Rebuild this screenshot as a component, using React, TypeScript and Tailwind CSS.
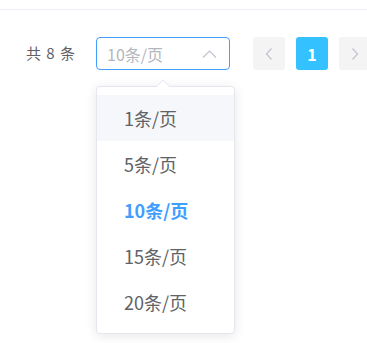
import React from "react";

const sizes = [1, 5, 10, 15, 20];

const App = () => {
  return (
    <div className="w-[367px] h-[343px] bg-white overflow-hidden font-['Noto_Sans_CJK_SC','Noto_Sans',sans-serif]">
      <div className="h-[10px] border-b border-[#ebeef5]" />
      <div className="flex items-center pl-[26px] mt-[27px] h-[33px]">
        <span className="inline-block shrink-0 text-[15px] text-[#606266] w-[70px] [word-spacing:2px]">共 8 条</span>
        <div className="relative shrink-0">
          <div className="w-[134px] h-[33px] border border-[#409eff] rounded-[4px] flex items-center pl-[10px] pr-[12px] justify-between">
            <span className="text-[16px] text-[#b4b7bd]">10条/页</span>
            <svg width="15" height="8" viewBox="0 0 15 8" fill="none">
              <path d="M1 7.5L7.5 1L14 7.5" stroke="#c0c4cc" strokeWidth="1.2" />
            </svg>
          </div>
          <div className="absolute left-0 top-[49px] w-[139px] bg-white border border-[#e4e7ed] rounded-[4px] shadow-[0_2px_12px_rgba(0,0,0,0.1)] py-[8px] z-10">
            <svg className="absolute left-[59px] top-[-8px]" width="14" height="8" viewBox="0 0 14 8">
              <path d="M0 8L7 1L14 8" fill="white" stroke="#e4e7ed" strokeWidth="1" />
            </svg>
            {sizes.map((s) => (
              <div
                key={s}
                className={
                  s === 1
                    ? "h-[46px] flex items-center pl-[27px] text-[18px] text-[#606266] bg-[#f5f7fa]"
                    : s === 10
                    ? "h-[46px] flex items-center pl-[27px] text-[18px] text-[#409eff] font-bold"
                    : "h-[46px] flex items-center pl-[27px] text-[18px] text-[#606266]"
                }
              >
                {s}条/页
              </div>
            ))}
          </div>
        </div>
        <div className="flex items-center gap-[11px] ml-[23px]">
          <div className="shrink-0 w-[32px] h-[33px] bg-[#f4f4f5] rounded-[3px] flex items-center justify-center">
            <svg width="8" height="12" viewBox="0 0 8 12" fill="none">
              <path d="M6.5 0.5L1.5 6L6.5 11.5" stroke="#c0c4cc" strokeWidth="1.2" />
            </svg>
          </div>
          <div className="shrink-0 w-[32px] h-[33px] bg-[#33c2ff] rounded-[3px] flex items-center justify-center text-white font-bold text-[16px]">
            1
          </div>
          <div className="shrink-0 w-[32px] h-[33px] bg-[#f4f4f5] rounded-[3px] flex items-center justify-center">
            <svg width="8" height="12" viewBox="0 0 8 12" fill="none">
              <path d="M1.5 0.5L6.5 6L1.5 11.5" stroke="#c0c4cc" strokeWidth="1.2" />
            </svg>
          </div>
        </div>
      </div>
    </div>
  );
};

export default App;
